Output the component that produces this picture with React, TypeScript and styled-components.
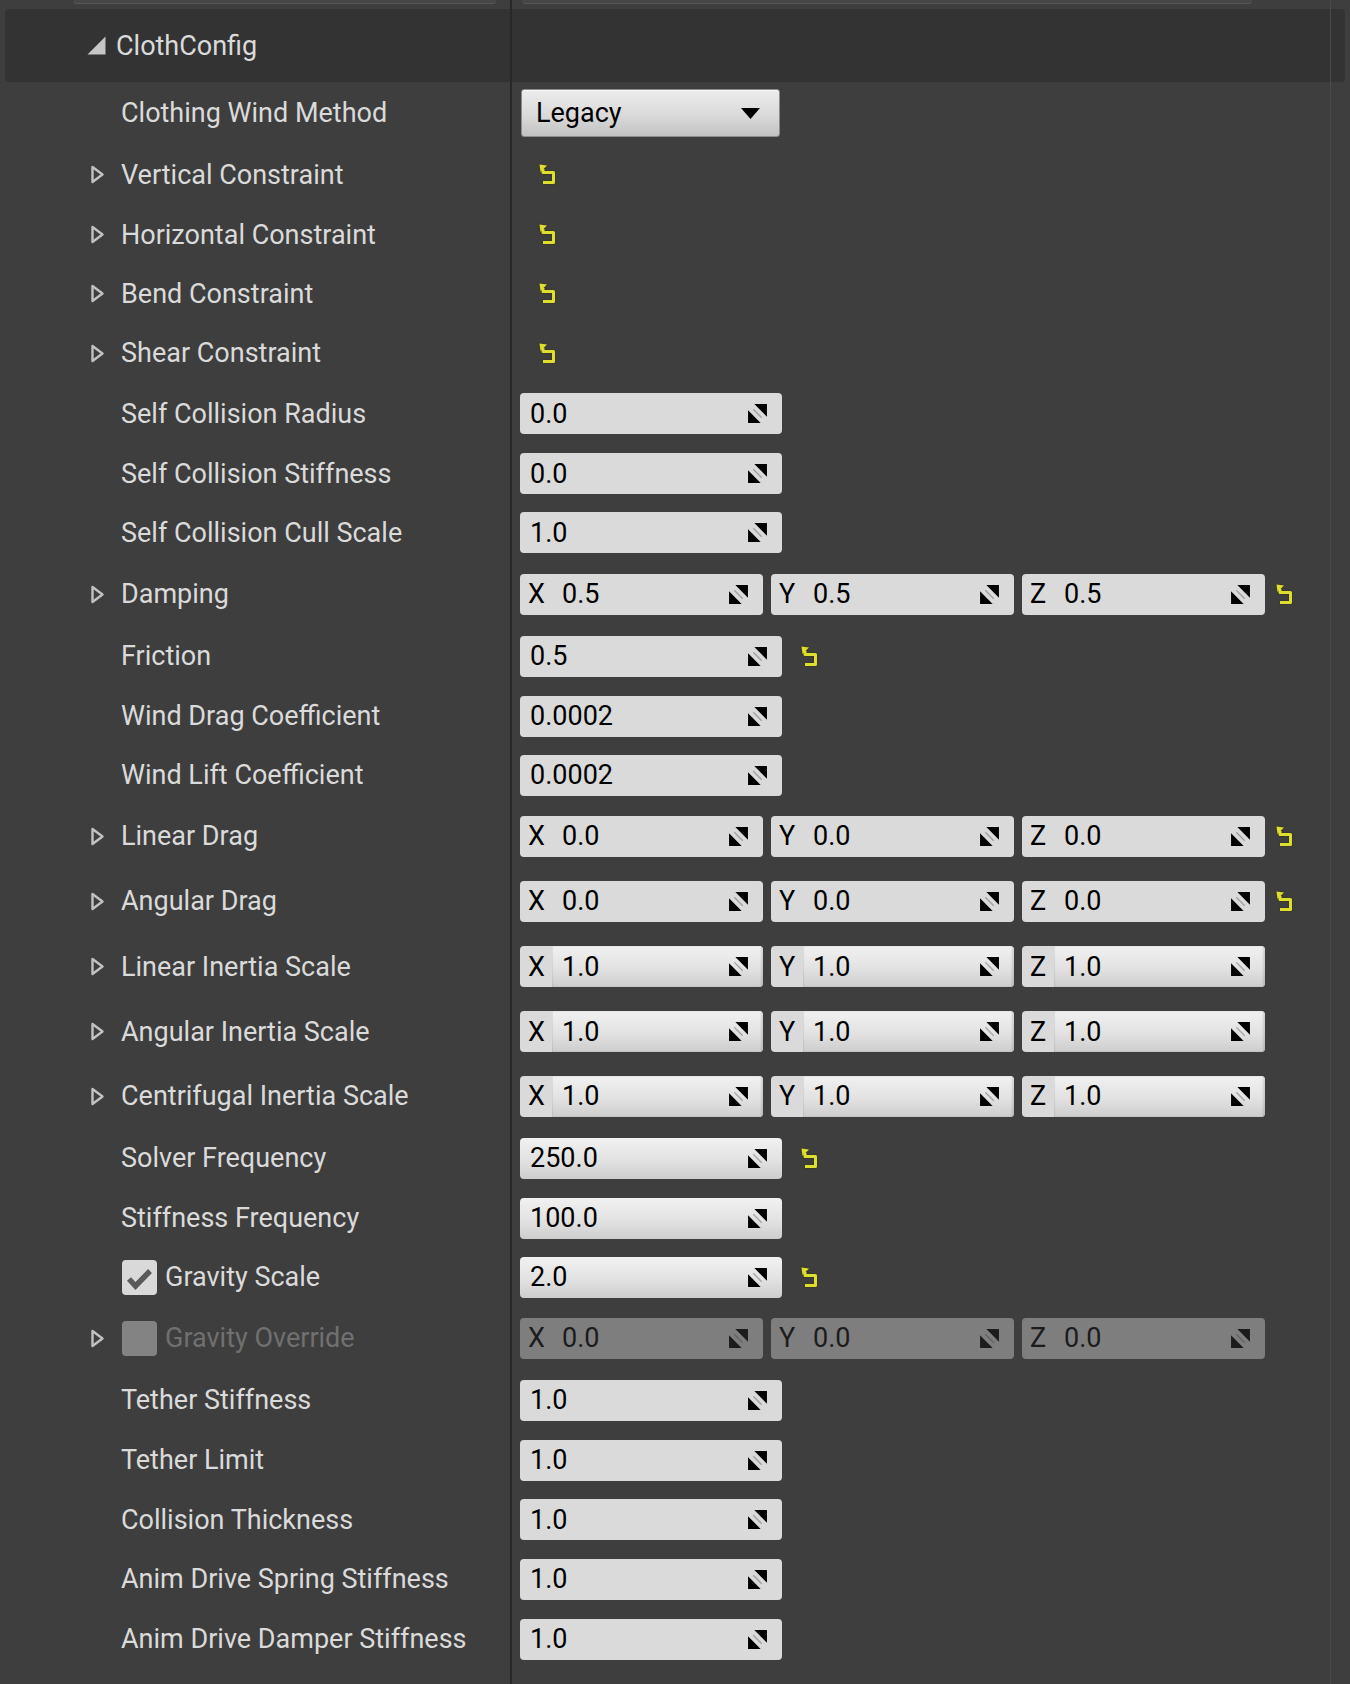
import React from 'react';
import styled, { createGlobalStyle, css } from 'styled-components';

const Global = createGlobalStyle`
  *, *::before, *::after { box-sizing: border-box; }
  html, body { margin: 0; padding: 0; background: #3e3e3e; }
  body { font-family: Roboto, "Noto Sans", "Liberation Sans", sans-serif; }
`;

const Panel = styled.div`
  position: relative;
  min-height: 1684px;
  background: #3e3e3e;
  overflow: hidden;
`;

const Splitter = styled.div<{ $x: number; $w: number; $color: string }>`
  position: absolute;
  top: 0;
  bottom: 0;
  left: ${(p) => p.$x}px;
  width: ${(p) => p.$w}px;
  background: ${(p) => p.$color};
  pointer-events: none;
`;

const TopStrip = styled.div`
  height: 9px;
  display: flex;
  padding-left: 73px;
  gap: 26px;
`;

const StripBox = styled.div<{ $w: number }>`
  width: ${(p) => p.$w}px;
  height: 4px;
  background: #474747;
  border-bottom: 1px solid #565656;
  border-radius: 0 0 3px 3px;
`;

const Header = styled.div`
  height: 73px;
  margin: 0 5px;
  background: #333333;
  border-radius: 4px;
  display: flex;
  align-items: center;
  padding-left: 82px;
  gap: 10px;
`;

const HeaderTitle = styled.span`
  font-size: 27px;
  color: #dadada;
`;

const Row = styled.div<{ $h: number }>`
  height: ${(p) => p.$h}px;
  display: flex;
  align-items: center;
`;

const NameCell = styled.div`
  width: 512px;
  flex: none;
  display: flex;
  align-items: center;
  padding-left: 90px;
  height: 100%;
`;

const ExpanderSlot = styled.div`
  width: 31px;
  flex: none;
  display: flex;
  align-items: center;
`;

const Label = styled.span<{ $dim?: boolean }>`
  font-size: 27px;
  color: ${(p) => (p.$dim ? '#707070' : '#dadada')};
  white-space: nowrap;
`;

const CheckBox = styled.div<{ $on: boolean }>`
  width: 35px;
  height: 35px;
  border-radius: 4px;
  flex: none;
  margin-left: 1px;
  margin-right: 8px;
  background: ${(p) => (p.$on ? '#d9d9d9' : '#838383')};
  display: flex;
  align-items: center;
  justify-content: center;
`;

const ValueCell = styled.div`
  flex: 1;
  display: flex;
  align-items: center;
  padding-left: 8px;
  height: 100%;
`;

const Dropdown = styled.div`
  width: 259px;
  height: 48px;
  margin-left: 1px;
  border: 1px solid #8c8c8c;
  border-radius: 3px;
  background: linear-gradient(180deg, #ececec 0%, #dadada 55%, #c2c2c2 100%);
  box-shadow: inset 0 1px 0 #f8f8f8;
  display: flex;
  align-items: center;
  justify-content: space-between;
  padding: 0 19px 0 14px;
  font-size: 27px;
  color: #000;
`;

const shadedFill = css`
  background: linear-gradient(180deg, #f1f1f1 0%, #e2e2e2 55%, #cdcdcd 100%);
`;

const NumBox = styled.div<{ $shaded?: boolean }>`
  width: 262px;
  height: 41px;
  border-radius: 4px;
  background: #dadada;
  ${(p) => p.$shaded && shadedFill}
  display: flex;
  align-items: center;
  justify-content: space-between;
  padding: 0 14px 0 10px;
  font-size: 27px;
  color: #000;
`;

const VecGroup = styled.div`
  display: flex;
  gap: 8px;
`;

const VecBox = styled.div<{ $disabled?: boolean }>`
  width: 243px;
  height: 41px;
  border-radius: 4px;
  overflow: hidden;
  display: flex;
  align-items: stretch;
  font-size: 27px;
  background: ${(p) => (p.$disabled ? '#7e7e7e' : '#dadada')};
  color: ${(p) => (p.$disabled ? '#1c1c1c' : '#000')};
`;

const VecLabel = styled.div`
  width: 32px;
  flex: none;
  display: flex;
  align-items: center;
  padding-left: 8px;
`;

const VecValue = styled.div<{ $shaded?: boolean }>`
  flex: 1;
  display: flex;
  align-items: center;
  justify-content: space-between;
  padding: 0 14px 0 10px;
  ${(p) =>
    p.$shaded &&
    css`
      ${shadedFill}
      box-shadow: inset 1px 0 1px rgba(0, 0, 0, 0.08), inset -2px 0 2px rgba(0, 0, 0, 0.12);
    `}
`;

const ResetWrap = styled.div<{ $ml: number }>`
  margin-left: ${(p) => p.$ml}px;
  display: flex;
  align-items: center;
  filter: drop-shadow(0 0 1px rgba(50, 50, 0, 0.95));
`;

const SpinIcon: React.FC<{ color?: string }> = ({ color = '#000' }) => (
  <svg width="21" height="21" viewBox="0 0 20 20">
    <polygon points="7,1 19,1 19,13" fill={color} />
    <polygon points="1,7 1,19 13,19" fill={color} />
    <line x1="6" y1="6" x2="14" y2="14" stroke={color} strokeOpacity="0.25" strokeWidth="1.5" />
  </svg>
);

const ResetIcon: React.FC<{ ml: number }> = ({ ml }) => (
  <ResetWrap $ml={ml}>
    <svg width="18" height="21" viewBox="0 0 18 21">
      <polygon points="0.5,0.5 8,1.5 1.5,8" fill="#dede30" />
      <path d="M4 5 V8.5 H14.5 V18.5 H4" stroke="#dede30" strokeWidth="3" fill="none" strokeLinejoin="round" />
    </svg>
  </ResetWrap>
);

const Expander = () => (
  <svg width="15" height="19" viewBox="0 0 15 19">
    <polygon points="2.5,2 12.5,9.5 2.5,17" fill="none" stroke="#c2c2c2" strokeWidth="2.4" strokeLinejoin="round" />
  </svg>
);

const HeaderArrow = () => (
  <svg width="19" height="19" viewBox="0 0 19 19">
    <polygon points="18.5,0.5 18.5,18.5 0.5,18.5" fill="#c6c6c6" />
  </svg>
);

const CheckMark = () => (
  <svg width="35" height="35" viewBox="0 0 35 35">
    <path d="M7 19 L13.5 26 L28 11" stroke="#5a5a5a" strokeWidth="5.5" fill="none" />
  </svg>
);

type Val =
  | { kind: 'dropdown'; text: string }
  | { kind: 'none' }
  | { kind: 'num'; value: string; shaded?: boolean }
  | { kind: 'vec'; value: string; shaded?: boolean; disabled?: boolean };

type RowDef = {
  label: string;
  h: number;
  expander?: boolean;
  check?: 'on' | 'off';
  dim?: boolean;
  reset?: boolean;
  value: Val;
};

const rows: RowDef[] = [
  { label: 'Clothing Wind Method', h: 62, value: { kind: 'dropdown', text: 'Legacy' } },
  { label: 'Vertical Constraint', h: 61, expander: true, reset: true, value: { kind: 'none' } },
  { label: 'Horizontal Constraint', h: 59, expander: true, reset: true, value: { kind: 'none' } },
  { label: 'Bend Constraint', h: 59, expander: true, reset: true, value: { kind: 'none' } },
  { label: 'Shear Constraint', h: 60, expander: true, reset: true, value: { kind: 'none' } },
  { label: 'Self Collision Radius', h: 61, value: { kind: 'num', value: '0.0' } },
  { label: 'Self Collision Stiffness', h: 59, value: { kind: 'num', value: '0.0' } },
  { label: 'Self Collision Cull Scale', h: 59, value: { kind: 'num', value: '1.0' } },
  { label: 'Damping', h: 64, expander: true, reset: true, value: { kind: 'vec', value: '0.5' } },
  { label: 'Friction', h: 60, reset: true, value: { kind: 'num', value: '0.5' } },
  { label: 'Wind Drag Coefficient', h: 60, value: { kind: 'num', value: '0.0002' } },
  { label: 'Wind Lift Coefficient', h: 58, value: { kind: 'num', value: '0.0002' } },
  { label: 'Linear Drag', h: 64, expander: true, reset: true, value: { kind: 'vec', value: '0.0' } },
  { label: 'Angular Drag', h: 66, expander: true, reset: true, value: { kind: 'vec', value: '0.0' } },
  { label: 'Linear Inertia Scale', h: 65, expander: true, value: { kind: 'vec', value: '1.0', shaded: true } },
  { label: 'Angular Inertia Scale', h: 65, expander: true, value: { kind: 'vec', value: '1.0', shaded: true } },
  { label: 'Centrifugal Inertia Scale', h: 64, expander: true, value: { kind: 'vec', value: '1.0', shaded: true } },
  { label: 'Solver Frequency', h: 60, reset: true, value: { kind: 'num', value: '250.0', shaded: true } },
  { label: 'Stiffness Frequency', h: 60, value: { kind: 'num', value: '100.0', shaded: true } },
  { label: 'Gravity Scale', h: 58, check: 'on', reset: true, value: { kind: 'num', value: '2.0', shaded: true } },
  { label: 'Gravity Override', h: 64, expander: true, check: 'off', dim: true, value: { kind: 'vec', value: '0.0', disabled: true } },
  { label: 'Tether Stiffness', h: 60, value: { kind: 'num', value: '1.0' } },
  { label: 'Tether Limit', h: 60, value: { kind: 'num', value: '1.0' } },
  { label: 'Collision Thickness', h: 59, value: { kind: 'num', value: '1.0' } },
  { label: 'Anim Drive Spring Stiffness', h: 60, value: { kind: 'num', value: '1.0' } },
  { label: 'Anim Drive Damper Stiffness', h: 60, value: { kind: 'num', value: '1.0' } },
];

const ValueView: React.FC<{ v: Val; reset?: boolean }> = ({ v, reset }) => {
  if (v.kind === 'dropdown') {
    return (
      <Dropdown>
        <span>{v.text}</span>
        <svg width="19" height="11" viewBox="0 0 19 11">
          <polygon points="0,0 19,0 9.5,11" fill="#000" />
        </svg>
      </Dropdown>
    );
  }
  if (v.kind === 'none') {
    return reset ? <ResetIcon ml={19} /> : null;
  }
  if (v.kind === 'num') {
    return (
      <>
        <NumBox $shaded={v.shaded}>
          <span>{v.value}</span>
          <SpinIcon />
        </NumBox>
        {reset && <ResetIcon ml={19} />}
      </>
    );
  }
  const iconColor = v.disabled ? '#1c1c1c' : '#000';
  return (
    <>
      <VecGroup>
        {['X', 'Y', 'Z'].map((axis) => (
          <VecBox key={axis} $disabled={v.disabled}>
            <VecLabel>{axis}</VecLabel>
            <VecValue $shaded={v.shaded}>
              <span>{v.value}</span>
              <SpinIcon color={iconColor} />
            </VecValue>
          </VecBox>
        ))}
      </VecGroup>
      {reset && <ResetIcon ml={11} />}
    </>
  );
};

export default function App() {
  return (
    <>
      <Global />
      <Panel>
        <TopStrip>
          <StripBox $w={423} />
          <StripBox $w={730} />
        </TopStrip>
        <Header>
          <HeaderArrow />
          <HeaderTitle>ClothConfig</HeaderTitle>
        </Header>
        {rows.map((r) => (
          <Row key={r.label} $h={r.h}>
            <NameCell>
              <ExpanderSlot>{r.expander && <Expander />}</ExpanderSlot>
              {r.check && <CheckBox $on={r.check === 'on'}>{r.check === 'on' && <CheckMark />}</CheckBox>}
              <Label $dim={r.dim}>{r.label}</Label>
            </NameCell>
            <ValueCell>
              <ValueView v={r.value} reset={r.reset} />
            </ValueCell>
          </Row>
        ))}
        <Splitter $x={510} $w={2} $color="#282828" />
        <Splitter $x={1330} $w={1} $color="#4a4a4a" />
      </Panel>
    </>
  );
}
